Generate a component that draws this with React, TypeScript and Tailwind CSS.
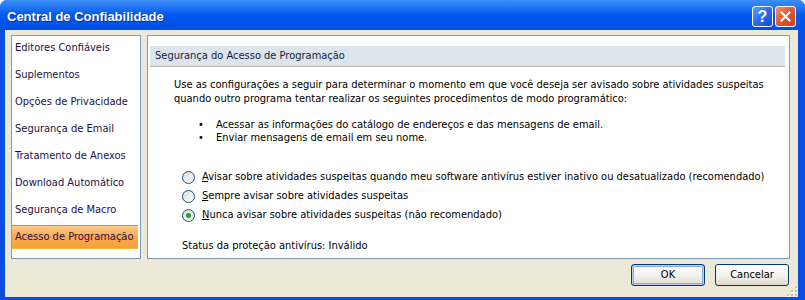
import type { ReactNode } from 'react'

const font = "font-['DejaVu_Sans_Condensed','DejaVu_Sans',sans-serif]"

const menuItems = [
  'Editores Confiáveis',
  'Suplementos',
  'Opções de Privacidade',
  'Segurança de Email',
  'Tratamento de Anexos',
  'Download Automático',
  'Segurança de Macro',
  'Acesso de Programação'
]

function Radio({ checked, children }: { checked?: boolean; children: ReactNode }) {
  return (
    <div className="flex items-center h-[19px]">
      <span className="w-[13px] h-[13px] rounded-full border border-[#1c5180] bg-gradient-to-br from-[#dcdcd7] to-white flex items-center justify-center">
        {checked && <span className="w-[5px] h-[5px] rounded-full bg-[#21a121]" />}
      </span>
      <span className="ml-[7px]">{children}</span>
    </div>
  )
}

function XpButton({ label, isDefault }: { label: string; isDefault?: boolean }) {
  return (
    <button
      className={`w-[74px] h-[22px] rounded-[3px] border border-[#003c74] bg-gradient-to-b from-white via-[#f4f3ee] to-[#dcd9cf] text-[11px] text-black ${
        isDefault ? 'shadow-[inset_0_0_0_1px_#b7cdf5,inset_0_0_0_2px_#8aa7e8]' : ''
      }`}
    >
      {label}
    </button>
  )
}

export default function App() {
  return (
    <div className={`w-[805px] h-[300px] flex flex-col bg-[#0a4de0] rounded-t-[7px] overflow-hidden ${font}`}>
      {/* barra de título */}
      <div className="h-[30px] shrink-0 flex items-center px-[7px] bg-gradient-to-b from-[#3d8ef8] via-[#0058ee] to-[#0050e6]">
        <span className="flex-1 pt-[4px] font-['Liberation_Sans',sans-serif] font-bold text-[13px] text-white [text-shadow:1px_1px_#0a2f9a]">
          Central de Confiabilidade
        </span>
        <div className="flex gap-[2px] mr-[2px] mt-[3px]">
          <div className="w-[21px] h-[21px] rounded-[3px] border border-white bg-gradient-to-br from-[#5b9bff] via-[#2a6cf0] to-[#1748d8] flex items-center justify-center text-white font-['Liberation_Sans',sans-serif] font-bold text-[16px] leading-none">
            ?
          </div>
          <div className="w-[21px] h-[21px] rounded-[3px] border border-white bg-gradient-to-br from-[#f0906a] via-[#e2582f] to-[#c4401c] flex items-center justify-center">
            <svg width="11" height="11" viewBox="0 0 11 11">
              <path d="M1.5 1.5 L9.5 9.5 M9.5 1.5 L1.5 9.5" stroke="white" strokeWidth="2" strokeLinecap="square" />
            </svg>
          </div>
        </div>
      </div>

      {/* corpo */}
      <div className="flex-1 ml-[5px] mr-[7px] bg-[#ece9d8] pl-[6px] pr-[8px] pt-[5px] flex flex-col text-[11px]">
        <div className="flex gap-[6px] h-[224px]">
          <div className="w-[130px] bg-white border border-[#7f9db9] pt-0 pr-[2px]">
            {menuItems.map((item, i) => {
              const sel = i === menuItems.length - 1
              return (
                <div
                  key={item}
                  className={`h-[24px] mb-[3px] flex items-center pl-[3px] text-[#1d1045] ${
                    sel
                      ? 'bg-gradient-to-b from-[#fdc98a] via-[#fca94f] to-[#fb9f3c] border-t border-t-[#b39669] border-b border-b-[#f9b73c]'
                      : ''
                  }`}
                >
                  {item}
                </div>
              )
            })}
          </div>

          <div className="flex-1 bg-white border border-[#7f9db9] pt-[10px] pl-[2px] pr-[4px] text-black">
            <div className="h-[21px] bg-[#dde5ec] border-b border-[#b4b4b4] flex items-center pl-[5px] text-[#121a40]">
              Segurança do Acesso de Programação
            </div>

            <div className="pl-[24px] pt-[11px] leading-[14px]">
              <p>
                Use as configurações a seguir para determinar o momento em que você deseja ser avisado sobre atividades suspeitas
                <br />
                quando outro programa tentar realizar os seguintes procedimentos de modo programático:
              </p>
              <ul className="mt-[12px] pl-[24px] leading-[13px]">
                <li className="flex">
                  <span className="w-[18px]">•</span>
                  Acessar as informações do catálogo de endereços e das mensagens de email.
                </li>
                <li className="flex">
                  <span className="w-[18px]">•</span>
                  Enviar mensagens de email em seu nome.
                </li>
              </ul>
            </div>

            <div className="pl-[32px] mt-[24px]">
              <Radio>
                <u>A</u>visar sobre atividades suspeitas quando meu software antivírus estiver inativo ou desatualizado (recomendado)
              </Radio>
              <Radio>
                <u>S</u>empre avisar sobre atividades suspeitas
              </Radio>
              <Radio checked>
                <u>N</u>unca avisar sobre atividades suspeitas (não recomendado)
              </Radio>
              <p className="mt-[13px]">Status da proteção antivírus: Inválido</p>
            </div>
          </div>
        </div>

        <div className="flex justify-end gap-[10px] mt-[5px] pr-[1px]">
          <XpButton label="OK" isDefault />
          <XpButton label="Cancelar" />
        </div>
        {/* alça de redimensionar */}
        <div className="flex justify-end mt-auto -mr-[8px]">
          <svg width="11" height="11" viewBox="0 0 11 11">
            {[
              [9, 1],
              [9, 5],
              [5, 5],
              [9, 9],
              [5, 9],
              [1, 9]
            ].map(([x, y]) => (
              <g key={`${x}-${y}`}>
                <rect x={x} y={y} width="2" height="2" fill="#fff" />
                <rect x={x - 1} y={y - 1} width="2" height="2" fill="#c4c1b2" />
              </g>
            ))}
          </svg>
        </div>
      </div>
      <div className="h-[8px] shrink-0" />
    </div>
  )
}
